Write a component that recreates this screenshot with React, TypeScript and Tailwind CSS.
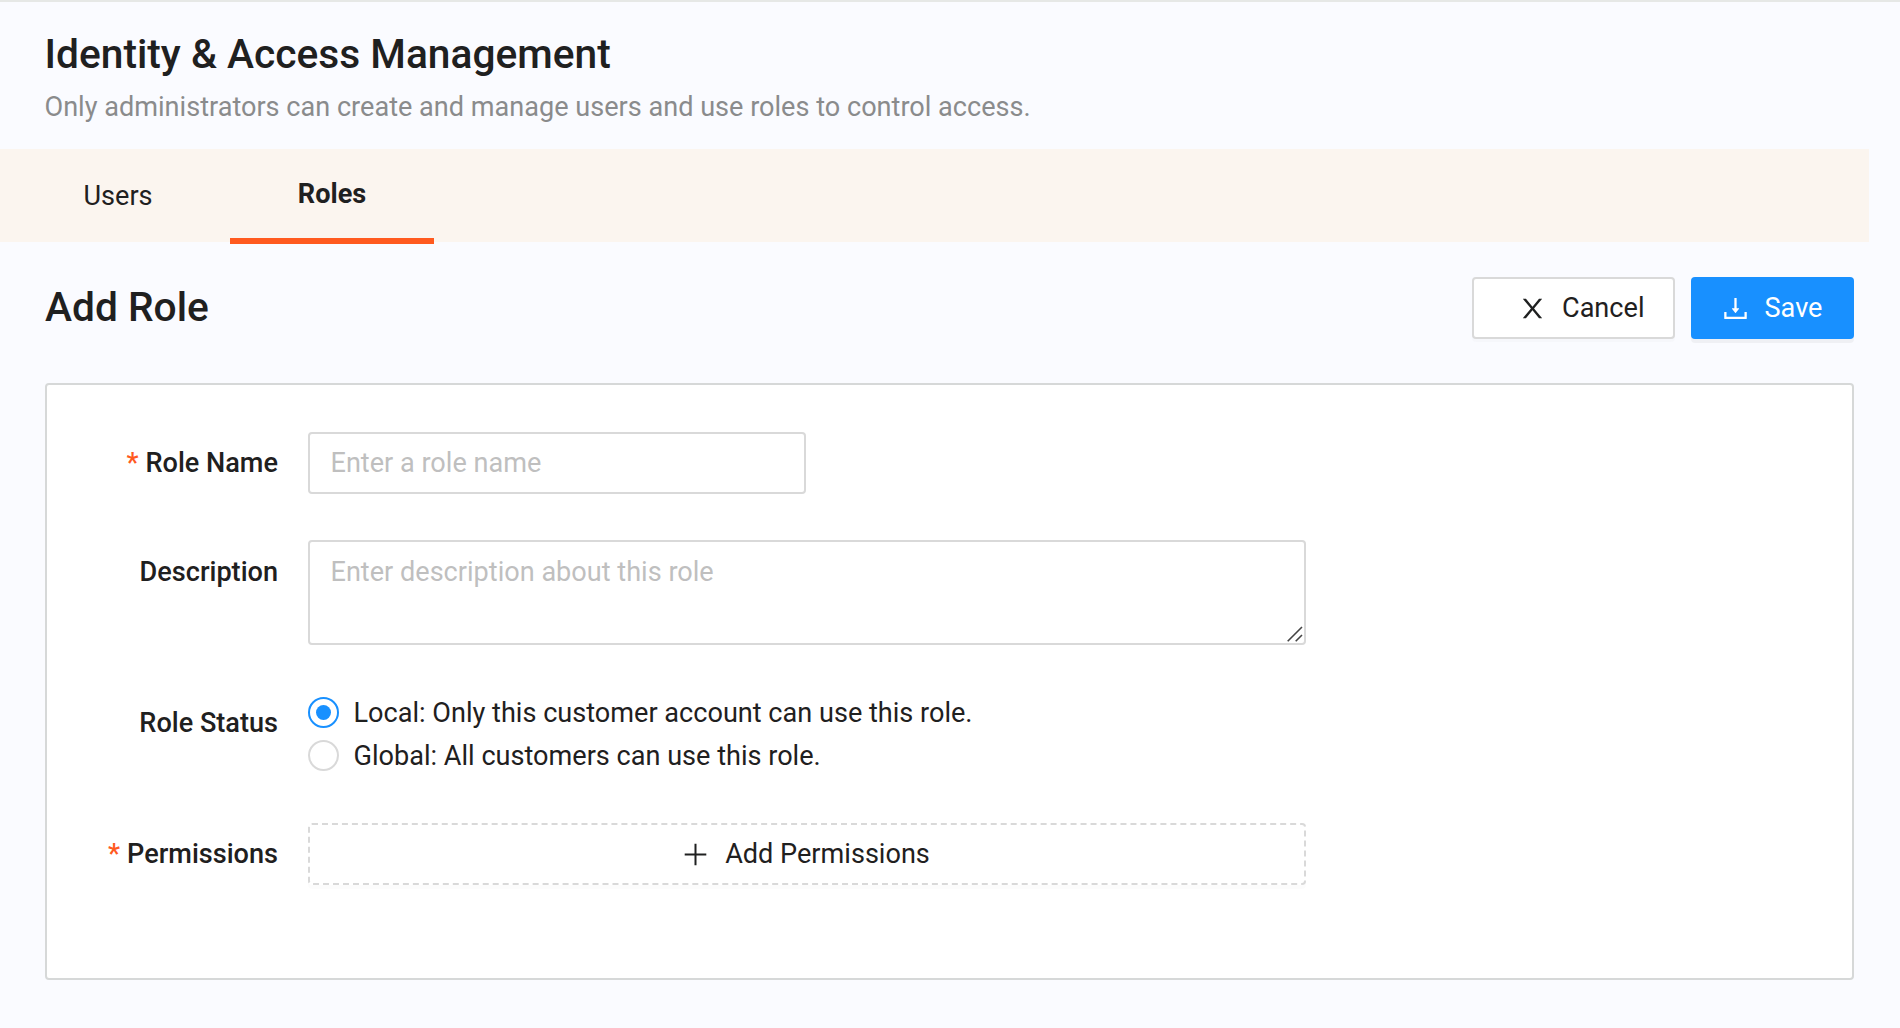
import type { ReactNode } from "react";

function CloseIcon() {
  return (
    <svg className="size-[27px]" viewBox="64 64 896 896" fill="currentColor" aria-hidden="true">
      <path d="M563.8 512l262.5-312.9c4.4-5.2.7-13.1-6.1-13.1h-79.8c-4.7 0-9.2 2.1-12.3 5.7L511.6 449.8 295.1 191.7c-3-3.6-7.5-5.7-12.3-5.7H203c-6.8 0-10.5 7.9-6.1 13.1L459.4 512 196.9 824.9A7.95 7.95 0 00203 838h79.8c4.7 0 9.2-2.1 12.3-5.7l216.5-258.1 216.5 258.1c3 3.6 7.5 5.7 12.3 5.7h79.8c6.8 0 10.5-7.9 6.1-13.1L563.8 512z" />
    </svg>
  );
}

function DownloadIcon() {
  return (
    <svg className="size-[27px]" viewBox="64 64 896 896" fill="currentColor" aria-hidden="true">
      <path d="M505.7 661a8 8 0 0012.6 0l112-141.7c4.1-5.2.4-12.9-6.3-12.9h-74.1V168c0-4.4-3.6-8-8-8h-60c-4.4 0-8 3.6-8 8v338.3H400c-6.7 0-10.4 7.7-6.3 12.9l112 141.8zM878 626h-60c-4.4 0-8 3.6-8 8v154H214V634c0-4.4-3.6-8-8-8h-60c-4.4 0-8 3.6-8 8v198c0 17.7 14.3 32 32 32h684c17.7 0 32-14.3 32-32V634c0-4.4-3.6-8-8-8z" />
    </svg>
  );
}

function PlusIcon() {
  return (
    <svg className="size-[27px]" viewBox="0 0 27 27" fill="currentColor" aria-hidden="true">
      <path d="M12.5 2.7h2v21.6h-2zM2.7 12.5h21.6v2H2.7z" />
    </svg>
  );
}

function Row({
  label,
  required,
  className,
  labelClass,
  children,
}: {
  label: string;
  required?: boolean;
  className: string;
  labelClass?: string;
  children: ReactNode;
}) {
  return (
    <div className={`flex items-start ${className}`}>
      <div className={`flex h-[62px] w-[232px] shrink-0 items-center justify-end gap-[7px] ${labelClass ?? ""}`}>
        {required && <span className="font-medium text-[#ff5a1f]">*</span>}
        <span className="font-medium whitespace-nowrap">{label}</span>
      </div>
      <div className="ml-[30px]">{children}</div>
    </div>
  );
}

function Radio({ checked, label }: { checked?: boolean; label: string }) {
  return (
    <label className="flex h-[43px] items-center gap-[14.5px] whitespace-nowrap">
      <span
        className={`flex size-[31px] items-center justify-center rounded-full border-2 bg-white ${
          checked ? "border-[#1890ff]" : "border-[#d9d9d9]"
        }`}
      >
        {checked && <span className="size-[15px] rounded-full bg-[#1890ff]" />}
      </span>
      <span>{label}</span>
    </label>
  );
}

export default function App() {
  return (
    <div className="h-[1028px] w-[1900px] overflow-hidden border-t-2 border-[#e6e8e6] bg-[#fafbff] font-[Roboto,sans-serif] text-[27.1px] leading-[42px] text-[#1f2020]">
      <header className="h-[147px] pt-[27px] pl-[44.5px]">
        <h1 className="text-[40.7px] leading-[50px] font-medium whitespace-nowrap">Identity &amp; Access Management</h1>
        <p className="mt-[7px] whitespace-nowrap text-[#8a8b8c]">
          Only administrators can create and manage users and use roles to control access.
        </p>
      </header>

      <nav className="flex h-[93px] w-[1869px] bg-[#fbf5ef]">
        <div className="w-[230px] pt-[26px] pl-[83.5px]">Users</div>
        <div className="h-[95px] w-[204px] border-b-6 border-[#ff5a1f] pt-[24px] text-center font-bold">Roles</div>
      </nav>

      <div className="mt-[35px] mr-[46px] ml-[45px] flex h-[62px] items-center">
        <h2 className="flex-1 pb-[2px] text-[40.7px] leading-[50px] font-medium">Add Role</h2>
        <button className="flex h-[62px] w-[203px] items-center rounded-[4px] border-2 border-[#d9d9d9] bg-white pl-[44.5px] shadow-[0_3px_0_rgba(0,0,0,0.015)]">
          <CloseIcon />
          <span className="ml-[16.5px]">Cancel</span>
        </button>
        <button className="ml-[16px] flex h-[62px] w-[163px] items-center rounded-[4px] bg-[#1890ff] pl-[31px] text-white shadow-[0_4px_0_rgba(0,0,0,0.045)]">
          <DownloadIcon />
          <span className="ml-[15.5px]">Save</span>
        </button>
      </div>

      <main className="mt-[44px] ml-[45px] h-[597px] w-[1809px] rounded-[4px] border-2 border-[#d6d8d8] bg-white pt-[47px]">
        <Row label="Role Name" required className="-ml-px">
          <input
            className="block h-[62px] w-[498px] rounded-[4px] border-2 border-[#d9d9d9] bg-white px-[20.5px] outline-none placeholder:text-[#bfbfbf]"
            placeholder="Enter a role name"
          />
        </Row>
        <Row label="Description" className="mt-[46px] -ml-px" labelClass="pt-[2px]">
          <div className="relative">
            <textarea
              className="block h-[105px] w-[998px] resize-none rounded-[4px] border-2 border-[#d9d9d9] bg-white px-[20.5px] pt-[9px] outline-none placeholder:text-[#bfbfbf]"
              placeholder="Enter description about this role"
            />
            <svg
              className="absolute right-[3px] bottom-[3px] size-[16px]"
              viewBox="0 0 16 16"
              stroke="#444"
              strokeWidth="1.6"
              aria-hidden="true"
            >
              <path d="M.7 15.3 15 1M8.7 15.3 15 9" />
            </svg>
          </div>
        </Row>
        <Row label="Role Status" className="mt-[46px] -ml-px" labelClass="pt-[2px]">
          <div className="h-[86px]">
            <Radio checked label="Local: Only this customer account can use this role." />
            <Radio label="Global: All customers can use this role." />
          </div>
        </Row>
        <Row label="Permissions" required className="mt-[46px] -ml-px">
          <button className="flex h-[62px] w-[998px] items-center justify-center rounded-[4px] border-2 border-dashed border-[#d9d9d9] bg-white pr-[2px] shadow-[0_4px_0_rgba(0,0,0,0.012)]">
            <PlusIcon />
            <span className="ml-[16px]">Add Permissions</span>
          </button>
        </Row>
      </main>
    </div>
  );
}
